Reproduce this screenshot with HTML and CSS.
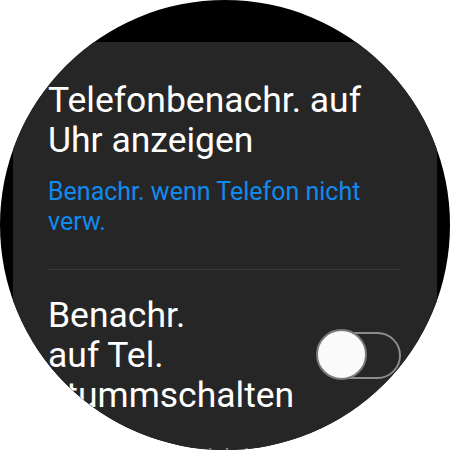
FILE: index.html
```html
<!DOCTYPE html>
<html lang="de">
<head>
<meta charset="utf-8">
<link rel="stylesheet" href="styles.css">
</head>
<body>
<div class="watch">
  <div class="top"></div>
  <div class="panel">
    <div class="item">
      <div class="title">Telefonbenachr. auf<br>Uhr anzeigen</div>
      <div class="sub">Benachr. wenn Telefon nicht<br>verw.</div>
    </div>
    <div class="divider"></div>
    <div class="item toggle-item">
      <div class="title">Benachr.<br>auf Tel.<br>stummschalten</div>
      <div class="switch"><div class="knob"></div></div>
    </div>
    <div class="next">Benachrichtigungen</div>
  </div>
</div>
</body>
</html>
```
FILE: styles.css
```css
html, body {
  margin: 0;
  padding: 0;
  background: #ffffff;
}
body {
  font-family: Roboto, "Noto Sans", sans-serif;
}
.watch {
  width: 450px;
  height: 450px;
  border-radius: 50%;
  background: #000;
  overflow: hidden;
  display: flex;
  flex-direction: column;
}
.top {
  height: 42px;
  flex: none;
}
.panel {
  flex: 1;
  margin: 0 13px;
  background: #262626;
  padding: 38px 36px 0 35px;
}
.title {
  color: #fff;
  font-size: 35.5px;
  line-height: 40px;
  white-space: nowrap;
}
.sub {
  color: #0f8bf0;
  font-size: 25px;
  line-height: 30px;
  margin-top: 17px;
  white-space: nowrap;
}
.divider {
  height: 1px;
  background: #3b3b3b;
  margin: 32px 0 0 0;
}
.toggle-item {
  display: flex;
  align-items: center;
  justify-content: space-between;
  margin-top: 25px;
}
.switch {
  position: relative;
  width: 79px;
  height: 43px;
  border: 2px solid #8c8c8c;
  border-radius: 24px;
  flex: none;
}
.knob {
  position: absolute;
  left: -4.5px;
  top: -4.5px;
  width: 47px;
  height: 47px;
  border-radius: 50%;
  background: #fafafa;
  border: 2px solid #7a7a7a;
}
.next {
  color: #8a8a8a;
  font-size: 22px;
  line-height: 30px;
  margin-top: 27px;
  text-align: center;
}
```
